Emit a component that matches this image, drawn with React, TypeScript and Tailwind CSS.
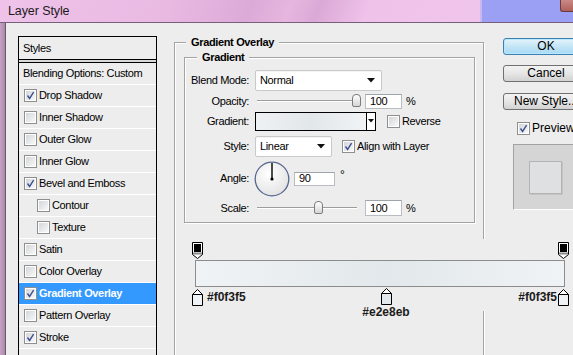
import React from 'react';

type Style = { label: string; checked?: boolean; indent?: boolean; active?: boolean };

const styleRows: Style[] = [
  { label: 'Drop Shadow', checked: true },
  { label: 'Inner Shadow' },
  { label: 'Outer Glow' },
  { label: 'Inner Glow' },
  { label: 'Bevel and Emboss', checked: true },
  { label: 'Contour', indent: true },
  { label: 'Texture', indent: true },
  { label: 'Satin' },
  { label: 'Color Overlay' },
  { label: 'Gradient Overlay', checked: true, active: true },
  { label: 'Pattern Overlay' },
  { label: 'Stroke', checked: true },
];

function Checkbox({ checked }: { checked?: boolean }) {
  return (
    <div className="w-[13px] h-[13px] shrink-0 border border-[#8e8f8f] bg-white p-[1px]">
      <div className="w-full h-full bg-gradient-to-br from-[#d4d6da] to-[#f8f8f8] relative">
        {checked && (
          <svg width="11" height="11" viewBox="0 0 11 11" className="absolute -left-[1px] -top-[1px]">
            <path d="M2.5 5.5 L4.6 8.5 L8.6 2.2" fill="none" stroke="#3d4f8f" strokeWidth="1.4" />
          </svg>
        )}
      </div>
    </div>
  );
}

function Select({ value, width }: { value: string; width: string }) {
  return (
    <div
      className={`${width} h-[21px] ml-[6px] shrink-0 flex items-center justify-between pl-[4px] pr-[6px] bg-white border border-[#c9c9c9] rounded-[2px] shadow-[inset_0_1px_0_#f4f4f4]`}
    >
      <span>{value}</span>
      <svg width="8" height="5" viewBox="0 0 8 5">
        <path d="M0 0 H8 L4 4.5 Z" fill="#111" />
      </svg>
    </div>
  );
}

function NumInput({ value, width, height = 'h-[15px]' }: { value: string; width: string; height?: string }) {
  return (
    <div
      className={`${width} ${height} flex items-center pl-[4px] bg-white border border-[#b9bcc2] border-t-[#9fa3aa] leading-none`}
    >
      {value}
    </div>
  );
}

function Slider({ at }: { at: string }) {
  return (
    <div className="w-[106px] h-[14px] ml-[6px] shrink-0 relative">
      <div className="absolute left-[2px] w-[100px] top-[6px] h-[2px] border-t border-[#9d9d9d] bg-white" />
      <div
        className={`absolute ${at} top-0 w-[9px] h-[13px] rounded-t-[4px] rounded-b-[2px] border border-[#7c7c7c] bg-gradient-to-b from-white to-[#d6d6d6]`}
      />
    </div>
  );
}

function Button({ label, primary }: { label: string; primary?: boolean }) {
  return (
    <div
      className={
        primary
          ? 'w-[86px] h-[17px] rounded-[3px] border border-[#3c7fb1] bg-gradient-to-b from-[#e5f4fc] via-[#c4e5f6] to-[#a7d9f5] shadow-[inset_0_0_0_1px_#b9e7ff] text-[12px] leading-[15px] text-center'
          : 'w-[86px] h-[17px] rounded-[3px] border border-[#707070] bg-gradient-to-b from-[#f3f3f3] via-[#e6e6e6] to-[#d2d2d2] text-[12px] leading-[15px] text-center'
      }
    >
      {label}
    </div>
  );
}

function TopStop() {
  return (
    <svg width="11" height="17" viewBox="0 0 11 17">
      <path d="M0.5 0.5 H10.5 V12.5 L5.5 16.5 L0.5 12.5 Z" fill="#fff" stroke="#000" />
      <rect x="2" y="2" width="7" height="8" fill="#000" />
      <rect x="1" y="10.5" width="9" height="2" fill="#8a8a8a" />
    </svg>
  );
}

function BottomStop({ color }: { color: string }) {
  return (
    <svg width="11" height="17" viewBox="0 0 11 17">
      <path d="M5.5 0.5 L10.5 5.5 V16.5 H0.5 V5.5 Z" fill="#fff" stroke="#000" />
      <rect x="1" y="6" width="9" height="10" fill={color} />
      <path d="M0.5 5.5 H10.5" stroke="#000" />
    </svg>
  );
}

export default function App() {
  return (
    <div className="w-[573px] h-[355px] overflow-hidden relative bg-[#ededed] text-black text-[11px] tracking-[-0.35px] font-['Liberation_Sans',Arial,sans-serif]">
      {/* title bar */}
      <div className="h-[23px] flex border-b border-[#76607c]">
        <div className="w-[480px] shrink-0 bg-[linear-gradient(110deg,#efc3ea_0%,#e9b9e2_35%,#dcaad7_52%,#e6b6df_60%,#dba9d6_66%,#efc2ea_76%,#f0c5eb_100%)] pl-[8px] flex items-center">
          <span className="text-[12.5px] text-[#1b1b1b] tracking-[-0.1px]">Layer Style</span>
        </div>
        <div className="w-[2px] shrink-0 bg-[#c7b8f0]" />
        <div className="flex-1 bg-[#9ba0f4] flex justify-end items-start">
          <div className="w-[13px] h-[12px] rounded-bl-[3px] border-l border-b border-[#6b3a3a] bg-gradient-to-b from-[#c98a86] to-[#b0605c]" />
        </div>
      </div>

      <div className="flex h-[332px]">
        {/* window frame */}
        <div className="w-[6px] shrink-0 bg-gradient-to-r from-[#c7a3c3] to-[#ad88aa] border-r border-[#6c566e]" />

        {/* styles list */}
        <div className="ml-[12px] mt-[13px] w-[139px] shrink-0 h-[330px] border border-black">
          <div className="h-[23px] border-b border-black flex items-center pl-[4px]">Styles</div>
          <div className="h-[2px] bg-[#d9d9d9]" />
          <div className="border-t border-black">
            <div className="h-[22px] border-b border-white flex items-center pl-[4px] whitespace-nowrap">
              Blending Options: Custom
            </div>
            {styleRows.map((row) => (
              <div
                key={row.label}
                className={`h-[22px] border-b border-white flex items-center gap-[2px] whitespace-nowrap ${
                  row.indent ? 'pl-[18px]' : 'pl-[5px]'
                } ${row.active ? 'bg-[#3399ff] text-white font-bold' : ''}`}
              >
                <Checkbox checked={row.checked} />
                <span>{row.label}</span>
              </div>
            ))}
            <div className="h-[22px]" />
          </div>
        </div>

        {/* gradient overlay group */}
        <fieldset className="ml-[17px] mt-[13px] w-[310px] shrink-0 h-[340px] border border-[#a3a3a3] shadow-[inset_1px_1px_0_#fff,1px_1px_0_#fff]">
          <legend className="ml-[11px] px-[5px] font-bold leading-[13px] bg-[#ededed]">Gradient Overlay</legend>
          <fieldset className="ml-[9px] mt-[2px] w-[291px] border border-[#a3a3a3] shadow-[inset_1px_1px_0_#fff,1px_1px_0_#fff] pt-[5px] pb-[2px]">
            <legend className="ml-[12px] px-[5px] font-bold leading-[13px] bg-[#ededed]">Gradient</legend>

            <div className="h-[22px] flex items-center">
              <div className="w-[64px] shrink-0 text-right">Blend Mode:</div>
              <Select value="Normal" width="w-[127px]" />
            </div>

            <div className="h-[20px] flex items-center">
              <div className="w-[64px] shrink-0 text-right">Opacity:</div>
              <Slider at="left-[97px]" />
              <div className="ml-[4px]">
                <NumInput value="100" width="w-[37px]" />
              </div>
              <span className="ml-[4px]">%</span>
            </div>

            <div className="h-[20px] flex items-center">
              <div className="w-[64px] shrink-0 text-right">Gradient:</div>
              <div className="ml-[6px] w-[121px] shrink-0 h-[19px] flex border border-black">
                <div className="flex-1 bg-[linear-gradient(90deg,#eef1f3,#e2e7ea_50%,#f1f3f5)] border-r border-black" />
                <div className="w-[8px] bg-white flex items-center justify-center">
                  <svg width="6" height="4" viewBox="0 0 6 4">
                    <path d="M0 0 H6 L3 3.5 Z" fill="#111" />
                  </svg>
                </div>
              </div>
              <div className="ml-[11px] flex items-center gap-[2px]">
                <Checkbox />
                <span>Reverse</span>
              </div>
            </div>

            <div className="h-[30px] flex items-center">
              <div className="w-[64px] shrink-0 text-right">Style:</div>
              <Select value="Linear" width="w-[77px]" />
              <div className="ml-[10px] flex items-center gap-[2px] whitespace-nowrap">
                <Checkbox checked />
                <span>Align with Layer</span>
              </div>
            </div>

            <div className="h-[35px] flex items-center">
              <div className="w-[64px] shrink-0 text-right">Angle:</div>
              <svg width="36" height="36" viewBox="0 0 36 36" className="ml-[5px] shrink-0">
                <defs>
                  <radialGradient id="dial" cx="0.4" cy="0.35" r="0.7">
                    <stop offset="0" stopColor="#ffffff" />
                    <stop offset="1" stopColor="#e2e2e2" />
                  </radialGradient>
                </defs>
                <circle cx="18" cy="18" r="16.8" fill="url(#dial)" stroke="#56678f" strokeWidth="1.3" />
                <path d="M18 18 V2" stroke="#000" strokeWidth="1.4" />
                <circle cx="18" cy="18" r="1.6" fill="#000" />
              </svg>
              <div className="ml-[4px]">
                <NumInput value="90" width="w-[41px]" height="h-[14px]" />
              </div>
              <span className="ml-[5px] -mt-[8px] text-[12px]">°</span>
            </div>

            <div className="h-[24px] flex items-center">
              <div className="w-[64px] shrink-0 text-right">Scale:</div>
              <Slider at="left-[59px]" />
              <div className="ml-[4px]">
                <NumInput value="100" width="w-[37px]" height="h-[16px]" />
              </div>
              <span className="ml-[4px]">%</span>
            </div>
          </fieldset>
        </fieldset>

        {/* buttons */}
        <div className="ml-[19px] shrink-0 pt-[15px] flex flex-col tracking-normal">
          <Button label="OK" primary />
          <div className="mt-[10px]">
            <Button label="Cancel" />
          </div>
          <div className="mt-[11px]">
            <Button label="New Style..." />
          </div>
          <div className="mt-[9px] ml-[14px] flex items-center gap-[2px] text-[12px]">
            <Checkbox checked />
            <span>Preview</span>
          </div>
          <div className="mt-[7px] ml-[10px] w-[70px] h-[66px] bg-[#d5d5d5] border border-[#a2a2a2] border-r-white border-b-white pl-[15px] pt-[16px]">
            <div className="w-[33px] h-[33px] bg-[#dee0e2] border border-[#b4b4b4] shadow-[1px_1px_0_#c4c4c4]" />
          </div>
        </div>
      </div>

      {/* gradient editor strip */}
      <div className="absolute left-[185px] top-[239px] w-[388px] h-[72px] bg-[#ededed] tracking-normal">
        <div className="mt-[3px] ml-[7px] w-[377px] flex justify-between">
          <TopStop />
          <TopStop />
        </div>
        <div className="mt-[1px] ml-[10px] w-[370px] h-[27px] border border-[#8c8c8c] bg-[linear-gradient(90deg,#f0f3f5,#e2e8eb_52%,#f0f3f5)]" />
        <div className="relative mt-[1px] h-[17px] text-[12px] font-bold text-[#1c1c1c]">
          <div className="absolute left-[7px] top-0 flex items-center gap-[4px]">
            <BottomStop color="#f0f3f5" />
            <span>#f0f3f5</span>
          </div>
          <div className="absolute left-[171px] top-0 w-[60px] flex flex-col items-center">
            <BottomStop color="#e2e8eb" />
            <span className="leading-[14px]">#e2e8eb</span>
          </div>
          <div className="absolute right-[4px] top-0 flex items-center gap-[1px]">
            <span>#f0f3f5</span>
            <BottomStop color="#f0f3f5" />
          </div>
        </div>
      </div>
    </div>
  );
}
